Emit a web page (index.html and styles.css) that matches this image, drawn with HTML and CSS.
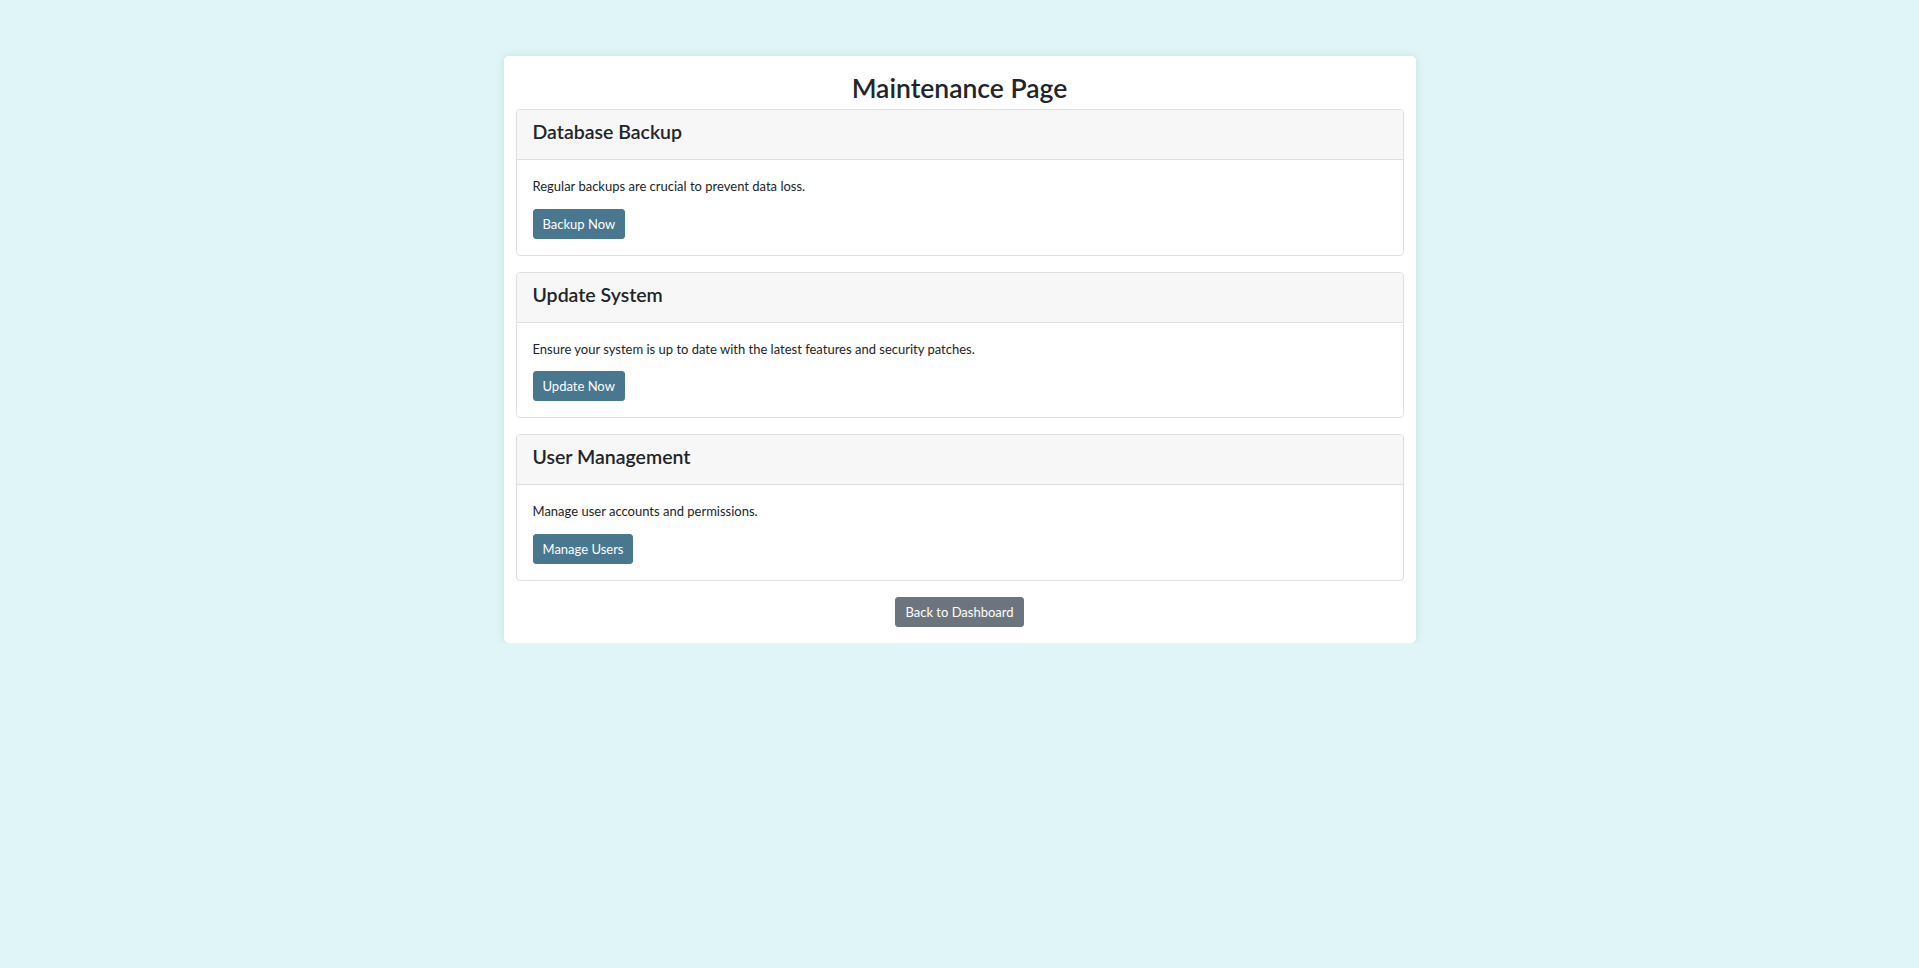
FILE: index.html
```html
<!DOCTYPE html>
<html lang="en">
<head>
<meta charset="utf-8">
<title>Maintenance Page</title>
<link rel="stylesheet" href="styles.css">
</head>
<body>
<div class="wrap">
  <h1 class="title">Maintenance Page</h1>
  <div class="card">
    <div class="card-header"><h2 class="card-title">Database Backup</h2></div>
    <div class="card-body">
      <p class="card-text">Regular backups are crucial to prevent data loss.</p>
      <button class="btn btn-primary">Backup Now</button>
    </div>
  </div>
  <div class="card">
    <div class="card-header"><h2 class="card-title">Update System</h2></div>
    <div class="card-body">
      <p class="card-text">Ensure your system is up to date with the latest features and security patches.</p>
      <button class="btn btn-primary">Update Now</button>
    </div>
  </div>
  <div class="card">
    <div class="card-header"><h2 class="card-title">User Management</h2></div>
    <div class="card-body">
      <p class="card-text">Manage user accounts and permissions.</p>
      <button class="btn btn-primary">Manage Users</button>
    </div>
  </div>
  <div class="actions">
    <button class="btn btn-secondary">Back to Dashboard</button>
  </div>
</div>
</body>
</html>
```
FILE: styles.css
```css
html, body {
  margin: 0;
  padding: 0;
}
body {
  background: #dff5f7;
  font-family: Lato, "Open Sans", "Liberation Sans", sans-serif;
  color: #212529;
}
.wrap {
  width: 912px;
  box-sizing: border-box;
  margin: 56px auto 0;
  padding: 15px 12px 16px;
  background: #fff;
  border-radius: 5px;
  box-shadow: 0 0 10px rgba(0, 0, 0, 0.1);
}
.title {
  margin: 0 0 4px;
  font-size: 26.5px;
  line-height: 34px;
  font-weight: 600;
  text-align: center;
}
.card {
  border: 1px solid #dfdfdf;
  border-radius: 4px;
  margin-bottom: 16px;
  overflow: hidden;
}
.card-header {
  background: #f7f7f7;
  border-bottom: 1px solid #dfdfdf;
  padding: 10px 16px 7px;
}
.card-title {
  margin: 0 0 8px;
  font-size: 19.5px;
  line-height: 24px;
  font-weight: 600;
}
.card-body {
  padding: 16px;
}
.card-text {
  margin: 0 0 11px;
  font-size: 13px;
  line-height: 21.5px;
}
.btn {
  display: inline-block;
  font-family: inherit;
  font-size: 13px;
  line-height: 20px;
  padding: 4px 9px;
  border: 1px solid transparent;
  border-radius: 3px;
  color: #fff;
  cursor: pointer;
  vertical-align: top;
}
.btn-primary {
  background: #48778f;
  border-color: #48778f;
}
.btn-secondary {
  background: #6c757d;
  border-color: #6c757d;
}
.actions {
  text-align: center;
  height: 30px;
}
```
